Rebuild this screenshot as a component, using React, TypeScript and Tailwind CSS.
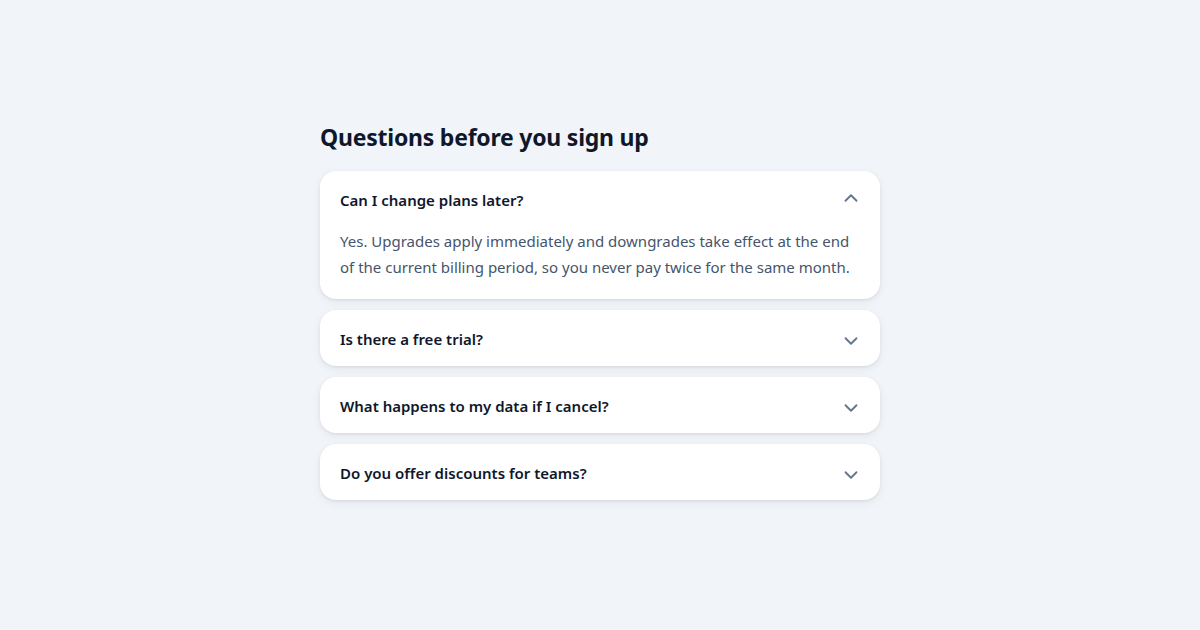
import { ChevronDown, ChevronUp } from 'lucide-react'

type Faq = { q: string; a?: string }

const faqs: Faq[] = [
  {
    q: 'Can I change plans later?',
    a: 'Yes. Upgrades apply immediately and downgrades take effect at the end of the current billing period, so you never pay twice for the same month.'
  },
  { q: 'Is there a free trial?' },
  { q: 'What happens to my data if I cancel?' },
  { q: 'Do you offer discounts for teams?' }
]

function FaqItem({ item, open }: { item: Faq; open: boolean }) {
  return (
    <div className="rounded-2xl bg-white shadow-[0_1px_3px_rgba(15,23,42,0.08),0_3px_10px_rgba(15,23,42,0.06)]">
      <div className="flex h-14 items-center justify-between pl-5 pr-[18px] pt-[2px]">
        <span className="text-[15px] font-semibold text-slate-900">{item.q}</span>
        {open ? (
          <ChevronUp size={22} strokeWidth={2} className="-mt-[4px] text-slate-500" />
        ) : (
          <ChevronDown size={22} strokeWidth={2} className="mt-[4px] text-slate-500" />
        )}
      </div>
      {open && item.a && (
        <p className="px-5 pb-[19px] pt-px text-[15px] leading-[26px] text-slate-600">{item.a}</p>
      )}
    </div>
  )
}

export default function App() {
  return (
    <div className="min-h-[630px] w-full bg-[#f1f5f9] pt-[121px] font-['Noto_Sans',sans-serif]">
      <div className="mx-auto w-[560px]">
        <h2 className="mb-[18px] text-[23px] font-bold leading-8 tracking-[-0.01em] text-slate-900">
          Questions before you sign up
        </h2>
        <div className="flex flex-col gap-[11px]">
          {faqs.map((f, i) => (
            <FaqItem key={f.q} item={f} open={i === 0} />
          ))}
        </div>
      </div>
    </div>
  )
}
